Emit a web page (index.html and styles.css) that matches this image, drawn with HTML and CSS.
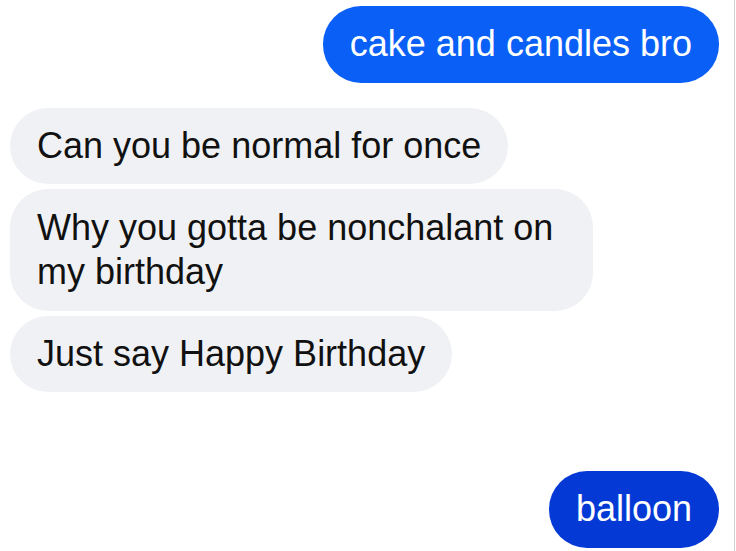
FILE: index.html
```html
<!DOCTYPE html>
<html>
<head>
<meta charset="utf-8">
<link rel="stylesheet" href="styles.css">
</head>
<body>
<div class="chat">
  <div class="bubble sent sent-a gap-top">cake and candles bro</div>
  <div class="bubble recv gap-large">Can you be normal for once</div>
  <div class="bubble recv wide gap-small">Why you gotta be nonchalant on my birthday</div>
  <div class="bubble recv gap-small">Just say Happy Birthday</div>
  <div class="bubble sent sent-b gap-huge">balloon</div>
</div>
</body>
</html>
```
FILE: styles.css
```css
html, body {
  margin: 0;
  padding: 0;
  background: #ffffff;
}
.chat {
  width: 735px;
  height: 551px;
  box-sizing: border-box;
  border-right: 1px solid #cfcfd2;
  display: flex;
  flex-direction: column;
  align-items: flex-start;
  padding: 0 15px 0 10px;
  font-family: "Liberation Sans", Arial, sans-serif;
  font-size: 36px;
  line-height: 44px;
}
.bubble {
  padding: 16px 27px;
  border-radius: 38px;
  max-width: 583px;
  box-sizing: border-box;
}
.recv {
  background: #f0f1f5;
  color: #111111;
}
.wide {
  width: 583px;
  padding-top: 17px;
  padding-bottom: 17px;
}
.sent {
  align-self: flex-end;
  color: #ffffff;
  padding-top: 16px;
  padding-bottom: 17px;
}
.sent-a { background: #0a5ff6; }
.sent-b { background: #0439d6; }
.gap-top { margin-top: 6px; }
.gap-large { margin-top: 25px; }
.gap-small { margin-top: 5px; }
.gap-huge { margin-top: 79px; }
```
